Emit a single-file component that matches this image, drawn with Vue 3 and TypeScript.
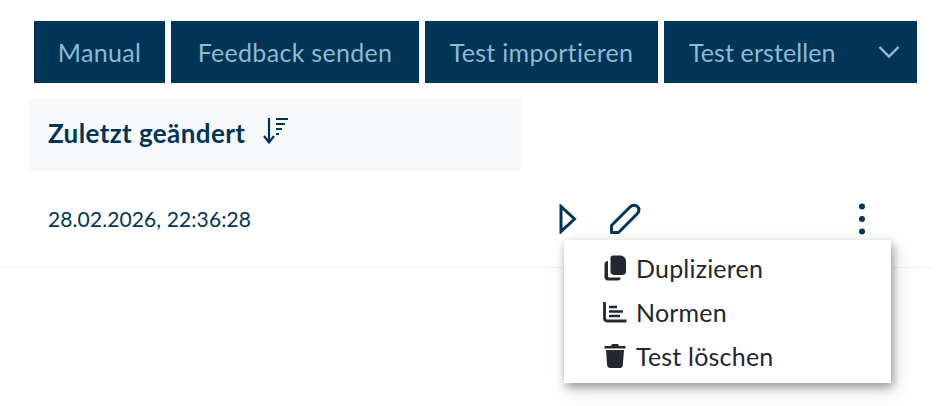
<script setup lang="ts">
const buttons = ['Manual', 'Feedback senden', 'Test importieren']
</script>

<template>
  <div class="page">
    <div class="toolbar">
      <button v-for="label in buttons" :key="label" class="btn" type="button">{{ label }}</button>
      <button class="btn btn-split" type="button">
        <span class="split-label">Test erstellen</span>
        <svg class="chevron" width="22" height="14" viewBox="0 0 22 14" fill="none">
          <path d="M1.5 2 L11 11.5 L20.5 2" stroke="currentColor" stroke-width="2.4" />
        </svg>
      </button>
    </div>

    <div class="head">
      <span class="head-label">Zuletzt geändert</span>
      <svg class="sort" width="26" height="30" viewBox="0 0 26 30" fill="none">
        <path d="M6 2 V26" stroke="#003558" stroke-width="2.2" />
        <path d="M1 20 L6 26.5 L11 20" stroke="#003558" stroke-width="2.2" />
        <path d="M13 3 H25 M13 8 H22 M13 13 H19 M13 18 H16" stroke="#003558" stroke-width="2.2" />
      </svg>
    </div>

    <div class="row">
      <span class="date">28.02.2026, 22:36:28</span>
      <div class="actions">
        <svg class="play" width="18" height="30" viewBox="0 0 18 30" fill="none">
          <path d="M2 2.5 V27.5 L15.5 15 Z" stroke="#003558" stroke-width="3" stroke-linejoin="miter" />
        </svg>
        <svg class="pencil" width="32" height="32" viewBox="0 0 32 32" fill="none">
          <path d="M2.5 22.5 L21 4 C23.4 1.6 26.6 1.6 28.6 3.6 C30.6 5.6 30.4 8.6 28 11 L9.5 29.5 H2.5 Z" stroke="#003558" stroke-width="3" stroke-linejoin="round" />
        </svg>
      </div>
      <svg class="dots" width="8" height="32" viewBox="0 0 8 32">
        <circle cx="4" cy="3.5" r="3" fill="#003558" />
        <circle cx="4" cy="16" r="3" fill="#003558" />
        <circle cx="4" cy="28.5" r="3" fill="#003558" />
      </svg>

      <div class="menu">
        <div class="menu-item">
          <svg width="24" height="26" viewBox="0 0 24 26">
            <path d="M10 0.5 H17 C20.5 0.5 23 3 23 6.5 V16.500 C23 18.500 21.500 20 19.500 20 H11 C9 20 7.500 18.500 7.500 16.500 V3 C7.500 1.500 8.500 0.500 10 0.500 Z" fill="#23272e" />
            <path d="M5 6 V21 C5 22 5.500 22.500 6.500 22.500 H17.500 V23.200 C17.500 24.500 16.500 25.500 15 25.500 H5 C3 25.500 1.500 24 1.500 22 V9 C1.500 7.500 3 6 5 6 Z" fill="#23272e" />
          </svg>
          <span>Duplizieren</span>
        </div>
        <div class="menu-item">
          <svg width="24" height="22" viewBox="0 0 24 22" fill="none">
            <path d="M1.500 1 V17 C1.500 19 2.500 20 4.500 20 H23.500" stroke="#23272e" stroke-width="2.800" />
            <path d="M6 6 H14 M6 10.500 H20 M6 15 H17" stroke="#23272e" stroke-width="2.400" />
          </svg>
          <span>Normen</span>
        </div>
        <div class="menu-item">
          <svg width="24" height="26" viewBox="0 0 24 26">
            <path d="M9 1 H15 L16 3 H22.500 V5.500 H1.500 V3 H8 Z" fill="#23272e" />
            <path d="M3 7 H21 L19.800 22.500 C19.600 24 18.600 25 17 25 H7 C5.400 25 4.400 24 4.200 22.500 Z" fill="#23272e" />
          </svg>
          <span>Test löschen</span>
        </div>
      </div>
    </div>
  </div>
</template>

<style>
html,
body {
  background: #fff;
}
</style>

<style scoped>
.page {
  width: 951px;
  height: 406px;
  overflow: hidden;
  font-family: Lato, "Open Sans", sans-serif;
  color: #003558;
}

.toolbar {
  display: grid;
  grid-template-columns: 131px 248px 233px 253px;
  gap: 6px;
  padding: 21px 0 0 34px;
}

.btn {
  height: 62px;
  padding: 0;
  border: none;
  background: #003558;
  color: #8dbad4;
  font-family: inherit;
  font-size: 25px;
  letter-spacing: 0.3px;
  white-space: nowrap;
}

.btn-split {
  display: flex;
  align-items: center;
  justify-content: space-between;
  padding: 0 17px 0 25px;
}

.split-label {
  letter-spacing: 0.1px;
}

.chevron {
  flex: none;
  color: #8dbad4;
}

.head {
  display: flex;
  align-items: center;
  gap: 18px;
  width: 492px;
  height: 73px;
  box-sizing: border-box;
  margin: 15px 0 0 29px;
  padding: 0 0 3px 19px;
  background: #f8f9fb;
}

.head-label {
  font-size: 26px;
  font-weight: 700;
  letter-spacing: 0.4px;
}

.sort {
  margin-bottom: 4px;
}

.row {
  position: relative;
  display: flex;
  align-items: center;
  width: 932px;
  height: 97px;
  box-sizing: border-box;
  padding: 0 0 0 48px;
  border-bottom: 1px solid #eeeff1;
}

.date {
  width: 511px;
  margin-top: -1px;
  font-size: 21px;
  letter-spacing: 0.1px;
}

.actions {
  display: flex;
  align-items: center;
  gap: 32px;
}

.dots {
  margin-left: 217px;
  margin-top: -1px;
}

.menu {
  position: absolute;
  left: 564px;
  top: 69px;
  width: 327px;
  height: 143px;
  box-sizing: border-box;
  padding: 6px 0 0 39px;
  background: #fff;
  box-shadow: 2px 4px 9px rgba(0, 0, 0, 0.36), 4px 8px 20px rgba(0, 0, 0, 0.1);
  z-index: 2;
}

.menu-item {
  display: flex;
  align-items: center;
  gap: 9px;
  height: 44px;
  color: #23272e;
  font-size: 25px;
  letter-spacing: 0.2px;
}

.menu-item svg {
  flex: none;
}
</style>
